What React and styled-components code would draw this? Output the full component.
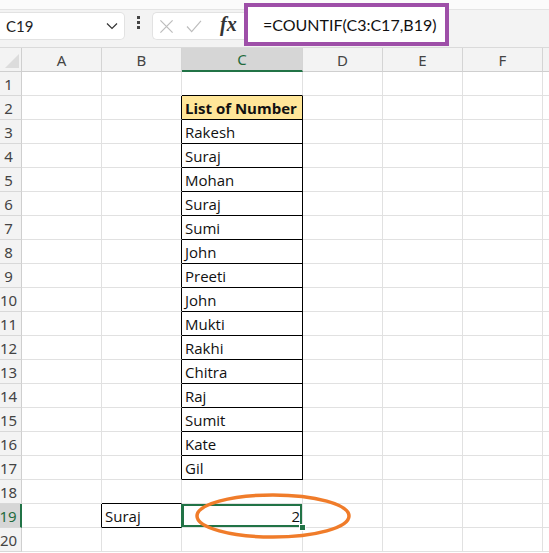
import React from "react";
import styled, { createGlobalStyle } from "styled-components";

const GlobalStyle = createGlobalStyle`
  html, body { margin: 0; padding: 0; background: #fff; overflow: hidden; }
  * { box-sizing: border-box; }
`;

const Page = styled.div`
  width: 549px;
  height: 553px;
  overflow: hidden;
  position: relative;
  font-family: Lato, "Noto Sans", sans-serif;
`;

const FormulaBar = styled.div`
  height: 48px;
  display: flex;
  align-items: flex-start;
  background: linear-gradient(#fbfbfb 0, #fbfbfb 9px, #e4e4e4 9px, #e4e4e4 10px, #f3f3f3 10px);
  border-bottom: 1px solid #dadada;
`;

const NameBox = styled.div`
  margin-top: 12px;
  width: 125px;
  height: 28px;
  background: #fff;
  border: 1px solid #e2e2e2;
  border-left: none;
  border-radius: 0 5px 5px 0;
  display: flex;
  align-items: center;
  justify-content: space-between;
  padding: 0 6px 0 6px;
  font-size: 15px;
  color: #222;
`;

const Dots = styled.div`
  width: 27px;
  height: 48px;
  display: flex;
  flex-direction: column;
  align-items: center;
  justify-content: center;
  gap: 2px;
  padding-bottom: 4px;
  span {
    width: 3px;
    height: 3px;
    background: #444;
  }
`;

const ButtonGroup = styled.div`
  margin-top: 12px;
  width: 92px;
  height: 28px;
  background: #fff;
  border: 1px solid #e2e2e2;
  border-right: none;
  border-radius: 5px 0 0 5px;
  display: flex;
  align-items: center;
  padding-left: 6px;
  gap: 12px;
`;

const Fx = styled.span`
  font-family: "Liberation Serif", "DejaVu Serif", serif;
  font-style: italic;
  font-weight: 700;
  font-size: 20px;
  color: #333;
  margin-left: 6px;
  margin-top: -3px;
`;

const FormulaInput = styled.div`
  margin-top: 3px;
  width: 205px;
  height: 43px;
  border: 4px solid #9e4fa8;
  background: #fff;
  display: flex;
  align-items: center;
  padding-left: 15px;
  font-size: 16px;
  color: #111;
`;

const Sheet = styled.div`
  display: grid;
  grid-template-columns: 22px 80px 80px 121px 80px 80px 80px 40px;
  grid-auto-rows: 24px;
`;

const ColHead = styled.div`
  font-family: "Noto Sans", "Open Sans", sans-serif;
  font-size: 15px;
  display: flex;
  align-items: center;
  justify-content: center;
  color: ${(p) => (p.$active ? "#1f6b3d" : "#444")};
  background: ${(p) => (p.$active ? "#d6d6d6" : "#f3f3f3")};
  border-right: 1px solid #d4d4d4;
  border-bottom: ${(p) => (p.$active ? "2px solid #217346" : "1px solid #cfcfcf")};
`;

const Corner = styled.div`
  background: #f3f3f3;
  border-right: 1px solid #cfcfcf;
  border-bottom: 1px solid #cfcfcf;
  overflow: hidden;
  svg { display: block; }
`;

const RowHead = styled.div`
  font-family: "Noto Sans", "Open Sans", sans-serif;
  font-size: 15px;
  display: flex;
  align-items: center;
  justify-content: center;
  padding-right: 4px;
  color: ${(p) => (p.$active ? "#1f6b3d" : "#444")};
  background: ${(p) => (p.$active ? "#d6d6d6" : "#f3f3f3")};
  border-bottom: 1px solid #d8d8d8;
  border-right: ${(p) => (p.$active ? "2px solid #217346" : "1px solid #cfcfcf")};
`;

const Cell = styled.div`
  position: relative;
  font-family: "Open Sans", Lato, sans-serif;
  font-size: 15px;
  color: #111;
  display: flex;
  align-items: center;
  justify-content: ${(p) => (p.$num ? "flex-end" : "flex-start")};
  padding: 1px ${(p) => (p.$num ? "2px" : "3px")} 0 3px;
  white-space: nowrap;
  font-weight: ${(p) => (p.$bold ? 700 : 400)};
  background: ${(p) => (p.$fill ? "#ffe699" : "#fff")};
  border-right: 1px solid ${(p) => (p.$rb ? "#000" : "#e1e1e1")};
  border-bottom: 1px solid ${(p) => (p.$bb ? "#000" : "#e1e1e1")};
  box-shadow: ${(p) => (p.$selected ? "inset 0 0 0 2px #217346, -1px 0 0 #217346" : "none")};
`;

const FillHandle = styled.span`
  position: absolute;
  right: -4px;
  bottom: -4px;
  width: 7px;
  height: 7px;
  background: #217346;
  border: 1px solid #fff;
  z-index: 2;
`;

const Annotation = styled.svg`
  position: absolute;
  left: 190px;
  top: 490px;
  pointer-events: none;
`;

const names = [
  "List of Number", "Rakesh", "Suraj", "Mohan", "Suraj", "Sumi", "John", "Preeti",
  "John", "Mukti", "Rakhi", "Chitra", "Raj", "Sumit", "Kate", "Gil",
];

const cols = ["A", "B", "C", "D", "E", "F", ""];

function cellProps(r, c) {
  // r: row number 1..20, c: column index (0 = A)
  const inTable = (rr, cc) => cc === 2 && rr >= 2 && rr <= 17;
  const inB19 = (rr, cc) => cc === 1 && rr === 19;
  const boxed = (rr, cc) => inTable(rr, cc) || inB19(rr, cc);
  const p = {};
  p.$rb = boxed(r, c) || boxed(r, c + 1);
  p.$bb = boxed(r, c) || boxed(r + 1, c);
  let text = "";
  if (inTable(r, c)) text = names[r - 2];
  if (c === 2 && r === 2) {
    p.$bold = true;
    p.$fill = true;
  }
  if (inB19(r, c)) text = "Suraj";
  if (c === 2 && r === 19) {
    text = "2";
    p.$num = true;
    p.$selected = true;
  }
  return { p, text };
}

export default function App() {
  const rows = Array.from({ length: 20 }, (_, i) => i + 1);
  return (
    <Page>
      <GlobalStyle />
      <FormulaBar>
        <NameBox>
          <span>C19</span>
          <svg width="12" height="8" viewBox="0 0 12 8">
            <path d="M1 1.5 L6 6.5 L11 1.5" fill="none" stroke="#333" strokeWidth="1.2" />
          </svg>
        </NameBox>
        <Dots>
          <span />
          <span />
          <span />
        </Dots>
        <ButtonGroup>
          <svg width="15" height="15" viewBox="0 0 16 16">
            <path d="M1.5 1.5 L14.5 14.5 M14.5 1.5 L1.5 14.5" stroke="#bdbdbd" strokeWidth="1.3" />
          </svg>
          <svg width="16" height="13" viewBox="0 0 17 14">
            <path d="M1 7 L6 12.5 L16 1" fill="none" stroke="#bdbdbd" strokeWidth="1.3" />
          </svg>
          <Fx>fx</Fx>
        </ButtonGroup>
        <FormulaInput>=COUNTIF(C3:C17,B19)</FormulaInput>
      </FormulaBar>
      <Sheet>
        <Corner>
          <svg width="22" height="24" viewBox="0 0 22 24">
            <path d="M19 6 L19 20 L5 20 Z" fill="#dcdcdc" />
          </svg>
        </Corner>
        {cols.map((c, i) => (
          <ColHead key={i} $active={c === "C"}>
            {c}
          </ColHead>
        ))}
        {rows.map((r) => (
          <React.Fragment key={r}>
            <RowHead $active={r === 19}>{r}</RowHead>
            {cols.map((_, c) => {
              const { p, text } = cellProps(r, c);
              return (
                <Cell key={c} {...p}>
                  {text}
                  {p.$selected && <FillHandle />}
                </Cell>
              );
            })}
          </React.Fragment>
        ))}
      </Sheet>
      <Annotation width="170" height="56" viewBox="0 0 170 56">
        <ellipse cx="83" cy="26" rx="76" ry="21" fill="none" stroke="#f07c2a" strokeWidth="3.5" />
      </Annotation>
    </Page>
  );
}
